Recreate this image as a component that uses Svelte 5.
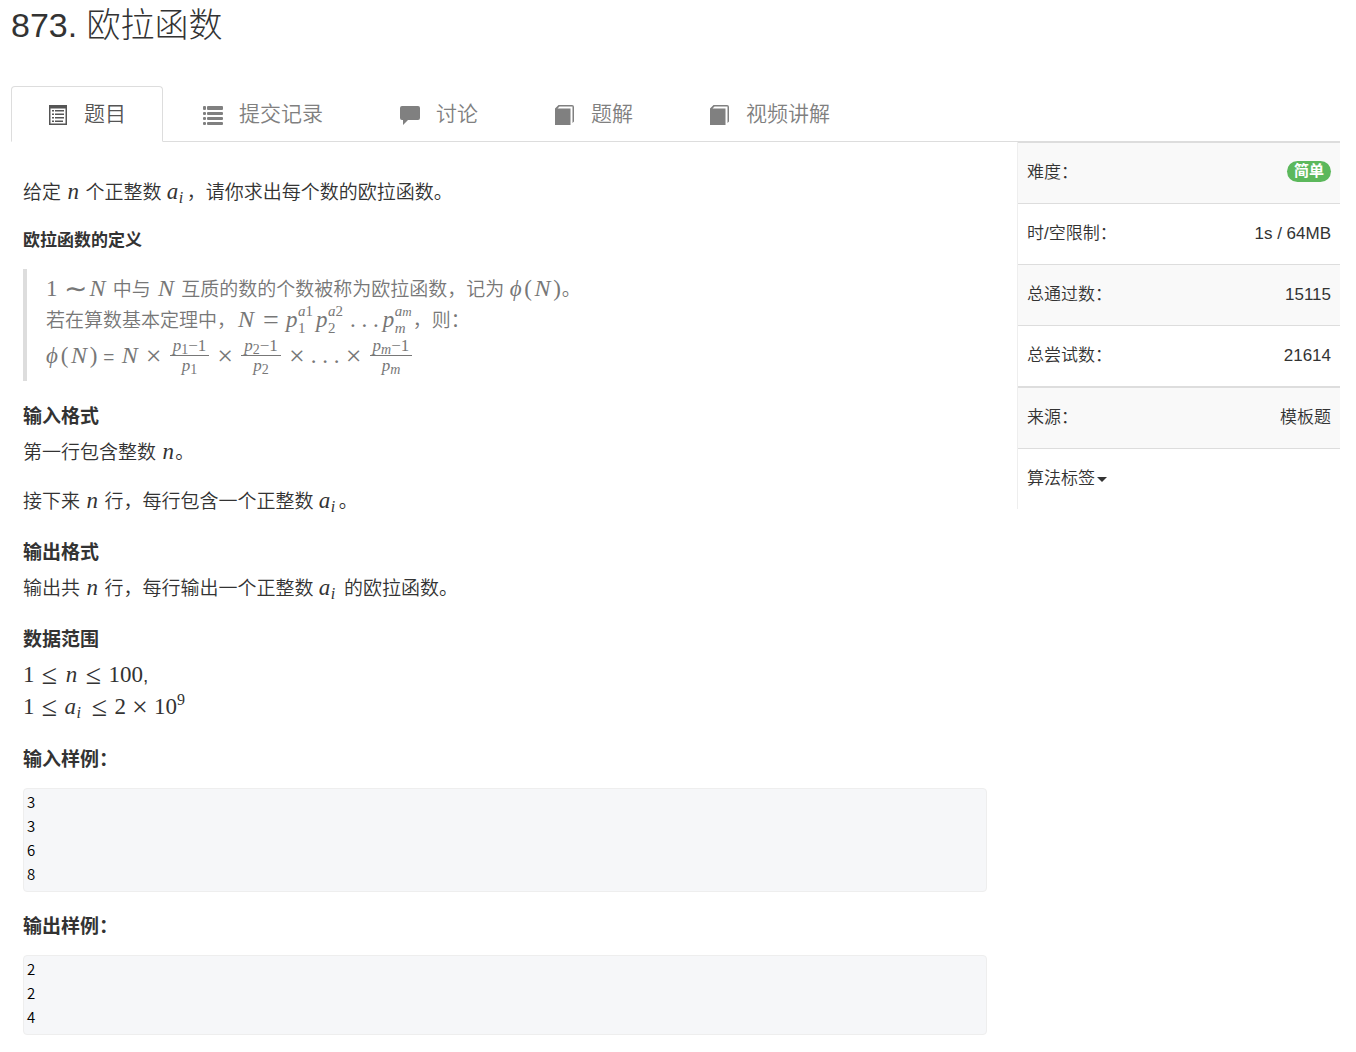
<script>
  const tabs = [
    { icon: 'detail', label: '题目' },
    { icon: 'list', label: '提交记录' },
    { icon: 'comment', label: '讨论' },
    { icon: 'book', label: '题解' },
    { icon: 'book', label: '视频讲解' }
  ];

  const stats = [
    { label: '时/空限制：', value: '1s / 64MB' },
    { label: '总通过数：', value: '15115' },
    { label: '总尝试数：', value: '21614' }
  ];

  const sampleInput = [3, 3, 6, 8].join('\n');
  const sampleOutput = [2, 2, 4].join('\n');

  let active = $state(0);

  function selectTab(event, index) {
    event.preventDefault();
    active = index;
  }
</script>

{#snippet icon(name)}
  <svg class="icon" viewBox="0 0 20 20" aria-hidden="true" fill="currentColor">
    {#if name === 'detail'}
      <path fill-rule="evenodd" d="M1 0h18v20H1zM2.500 3.500v15h15v-15z" />
      <path d="M4 5h2v1.500H4zM7 5h9v1.500H7zM4 8.500h2V10H4zM7 8.500h9V10H7zM4 12h2v1.500H4zM7 12h9v1.500H7zM4 15.500h2V17H4zM7 15.500h8V17H7z" />
    {:else if name === 'list'}
      <rect x="0" y="1" width="3" height="4" rx="1" /><rect x="4" y="1" width="16" height="4" rx="1" />
      <rect x="0" y="7" width="3" height="3" rx="1" /><rect x="4" y="7" width="16" height="3" rx="1" />
      <rect x="0" y="12" width="3" height="3" rx="1" /><rect x="4" y="12" width="16" height="3" rx="1" />
      <rect x="0" y="17" width="3" height="3" rx="1" /><rect x="4" y="17" width="16" height="3" rx="1" />
    {:else if name === 'comment'}
      <path d="M2 1h16q2 0 2 2v10q0 2-2 2H8l-5 5v-5H2q-2 0-2-2V3q0-2 2-2z" />
    {:else}
      <path d="M0 3.500L3.500 0H17q2 0 2 2v14.500L17.500 18V1.500H4.500L2.500 3.500H15.500V20H0z" />
    {/if}
  </svg>
{/snippet}

{#snippet n()}<span class="math"><i class="n">n</i></span>{/snippet}

{#snippet ai()}<span class="math"><i class="a">a</i><sub><i>i</i></sub></span>{/snippet}

{#snippet phi()}
  <i class="phi">ϕ</i><span class="paren">(</span><i class="cap">N</i><span class="paren">)</span>
{/snippet}

{#snippet frac(index, italic)}
  <span class="frac">
    <span class="num"><i>p</i><sub class:italic>{index}</sub>−1</span>
    <span class="den"><i>p</i><sub class:italic>{index}</sub></span>
  </span>
{/snippet}

<div class="page">
  <h1>873. 欧拉函数</h1>

  <nav>
    {#each tabs as tab, index}
      <a href="#tab-{index}" class:active={active === index} onclick={(e) => selectTab(e, index)}>
        {@render icon(tab.icon)}
        <span>{tab.label}</span>
      </a>
    {/each}
  </nav>

  <div class="columns">
    <main>
      <p>给定 {@render n()} 个正整数 {@render ai()}，请你求出每个数的欧拉函数。</p>

      <h5>欧拉函数的定义</h5>
      <blockquote>
        <div>
          <span class="math"><span>1</span><span class="rel">∼</span><i class="cap">N</i></span>
          中与 <span class="math"><i class="cap">N</i></span>
          互质的数的个数被称为欧拉函数，记为 <span class="math">{@render phi()}</span>。
        </div>
        <div>
          若在算数基本定理中，<span class="math">
            <i class="cap">N</i><span class="rel">=</span>
            <i class="p">p</i><span class="scripts"><span><i>a</i>1</span><span>1</span></span>
            <i class="p">p</i><span class="scripts"><span><i>a</i>2</span><span>2</span></span>
            <span class="dots">. . .</span>
            <i class="p">p</i><span class="scripts"><span><i>a<small>m</small></i></span><span><i>m</i></span></span>
          </span>，则：
        </div>
        <div>
          <span class="math">{@render phi()}</span> =
          <span class="math">
            <i class="cap">N</i><span class="bin">×</span>
            {@render frac('1', false)}<span class="bin">×</span>
            {@render frac('2', false)}<span class="bin">×</span>
            <span>. . .</span><span class="bin">×</span>
            {@render frac('m', true)}
          </span>
        </div>
      </blockquote>

      <h4>输入格式</h4>
      <p>第一行包含整数 {@render n()}。</p>
      <p>接下来 {@render n()} 行，每行包含一个正整数 {@render ai()}。</p>

      <h4>输出格式</h4>
      <p>输出共 {@render n()} 行，每行输出一个正整数 {@render ai()} 的欧拉函数。</p>

      <h4>数据范围</h4>
      <p class="range">
        <span class="math"><span>1</span><span class="rel">≤</span><i class="n">n</i><span class="rel">≤</span><span>100</span></span>,<br />
        <span class="math">
          <span>1</span><span class="rel">≤</span><i class="a">a</i><sub><i>i</i></sub><span class="rel">≤</span>
          <span>2</span><span class="bin">×</span><span>10</span><sup>9</sup>
        </span>
      </p>

      <h4 class="sample">输入样例：</h4>
      <pre>{sampleInput}</pre>

      <h4 class="sample">输出样例：</h4>
      <pre>{sampleOutput}</pre>
    </main>

    <aside>
      <table>
        <tbody>
          <tr>
            <th scope="row">难度：</th>
            <td><span class="badge">简单</span></td>
          </tr>
          {#each stats as stat}
            <tr>
              <th scope="row">{stat.label}</th>
              <td>{stat.value}</td>
            </tr>
          {/each}
        </tbody>
        <tbody>
          <tr>
            <th scope="row">来源：</th>
            <td>模板题</td>
          </tr>
          <tr>
            <td colspan="2" class="tags">
              <button type="button">算法标签<span class="caret"></span></button>
            </td>
          </tr>
        </tbody>
      </table>
    </aside>
  </div>
</div>

<style>
  :global(body) {
    margin: 0;
    background: #fff;
  }

  .page {
    padding: 0 16px 17px 11px;
    font-family: 'Liberation Sans', 'Noto Sans CJK SC', sans-serif;
    font-weight: 350;
    color: #333;
  }

  h1 {
    margin: 0;
    padding: 5px 0 41px;
    font-size: 34px;
    font-weight: 300;
    line-height: 40px;
  }

  nav {
    display: flex;
    gap: 3px;
    border-bottom: 1px solid #ddd;
  }

  nav a {
    display: flex;
    align-items: center;
    gap: 16px;
    height: 54px;
    margin-bottom: -1px;
    padding: 0 36px;
    border: 1px solid transparent;
    border-radius: 4px 4px 0 0;
    font-size: 21px;
    line-height: 30px;
    color: gray;
    text-decoration: none;
  }

  nav a.active {
    border-color: #ddd;
    border-bottom-color: #fff;
    background: #fff;
    color: #555;
  }

  .icon {
    width: 20px;
    height: 20px;
    margin-top: 2px;
  }

  .columns {
    display: grid;
    grid-template-columns: minmax(0, 1fr) 323px;
    align-items: start;
  }

  main {
    padding: 35px 30px 0 12px;
    font-size: 19px;
    line-height: 31px;
  }

  p {
    margin: 0 0 18px;
  }

  .range {
    line-height: 32px;
  }

  h4 {
    margin: 25px 0 10px;
    font-size: 19px;
    line-height: 21px;
  }

  h4.sample {
    margin: 25px 0 18px;
  }

  pre + h4.sample {
    margin-top: 24px;
  }

  h5 {
    margin: 24px 0 19px;
    font-size: 17px;
    line-height: 18px;
  }

  blockquote {
    margin: 0;
    padding: 5px 19px 6px;
    border-left: 4px solid #ddd;
    color: #777;
  }

  pre {
    margin: 0;
    padding: 1px 3px 5px;
    border: 1px solid #eee;
    border-radius: 4px;
    background: #f6f7f9;
    font-family: 'Noto Sans CJK SC', sans-serif;
    font-size: 15px;
    font-weight: 350;
    line-height: 24px;
    color: #000;
  }

  .math {
    display: inline-flex;
    align-items: center;
    font-family: 'Liberation Serif', serif;
    font-size: 23px;
    font-weight: 400;
    line-height: 27px;
    white-space: nowrap;
  }

  .n {
    width: 14px;
    text-align: center;
  }

  .a,
  .p {
    width: 12px;
  }

  .cap {
    width: 20px;
    font-size: 24px;
    text-align: center;
  }

  .phi {
    width: 14px;
  }

  .paren {
    width: 9px;
    text-align: center;
  }

  .rel,
  .bin {
    width: 18px;
    font-size: 28px;
    text-align: center;
  }

  .rel {
    margin: 0 6px;
  }

  .bin {
    margin: 0 5px;
  }

  .dots {
    margin: 0 4px;
  }

  sub,
  sup {
    font-size: 16px;
    line-height: 14px;
  }

  sub {
    align-self: flex-end;
    min-width: 8px;
  }

  sup {
    align-self: flex-start;
  }

  .scripts {
    display: flex;
    flex-direction: column;
    min-width: 18px;
    margin: -3px 0;
    font-size: 15px;
    line-height: 17px;
  }

  .scripts small {
    font-size: 13px;
  }

  .frac {
    display: flex;
    flex-direction: column;
    margin: 0 2px;
    font-size: 17px;
    line-height: 19px;
    text-align: center;
  }

  .frac sub {
    font-size: 14px;
    line-height: 10px;
    vertical-align: -3px;
  }

  .frac .italic {
    font-style: italic;
  }

  .num {
    padding: 0 3px;
    border-bottom: 1px solid #777;
  }

  table {
    width: 100%;
    border-collapse: separate;
    border-spacing: 0;
    border-left: 1px solid #eee;
    font-size: 17px;
    line-height: 24px;
  }

  th,
  td {
    height: 24px;
    padding: 18px 9px;
    border-top: 1px solid #ddd;
    font-weight: inherit;
    text-align: left;
  }

  td {
    text-align: right;
  }

  tbody + tbody tr:first-child > * {
    border-top-width: 2px;
  }

  tr:nth-child(odd) {
    background: #f9f9f9;
  }

  .badge {
    display: inline-block;
    padding: 0 7px 2px;
    border-radius: 11px;
    background: #5cb85c;
    font-size: 15px;
    font-weight: 700;
    line-height: 19px;
    vertical-align: top;
    color: #fff;
  }

  td.tags {
    text-align: left;
  }

  button {
    display: flex;
    align-items: center;
    gap: 2px;
    padding: 0;
    border: 0;
    background: none;
    font: inherit;
    color: inherit;
    cursor: pointer;
  }

  .caret {
    border-top: 5px solid #333;
    border-right: 5px solid transparent;
    border-left: 5px solid transparent;
  }
</style>
